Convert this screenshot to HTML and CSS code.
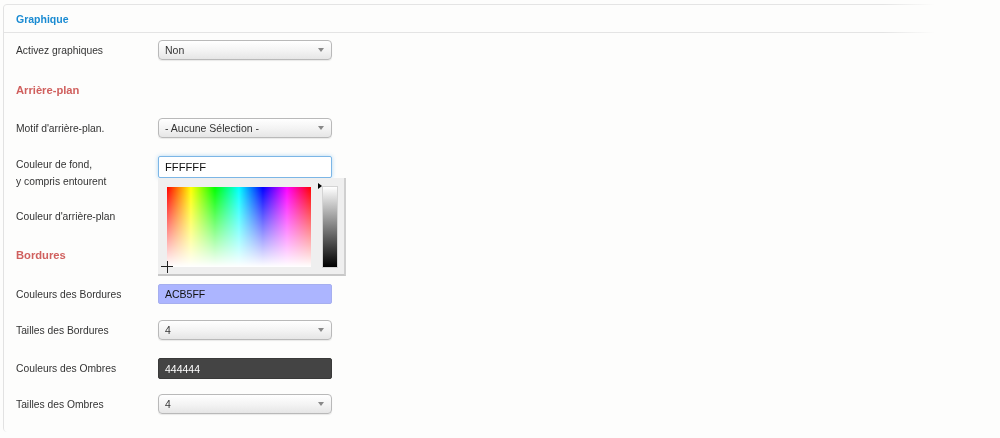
FILE: index.html
```html
<!DOCTYPE html>
<html lang="fr">
<head>
<meta charset="utf-8">
<title>Graphique</title>
<link rel="stylesheet" href="styles.css">
</head>
<body>
<div class="panel">
  <div class="panel-head">Graphique</div>
  <div class="panel-body">
    <div class="row r-activez">
      <label class="lbl">Activez graphiques</label>
      <div class="select"><span>Non</span><i class="caret"></i></div>
    </div>

    <h3 class="section">Arrière-plan</h3>

    <div class="row r-motif">
      <label class="lbl">Motif d'arrière-plan.</label>
      <div class="select"><span>- Aucune Sélection -</span><i class="caret"></i></div>
    </div>

    <div class="row r-fond">
      <label class="lbl two">Couleur de fond,<br>y compris entourent</label>
      <div class="ctrl-wrap">
        <div class="input focus">FFFFFF</div>
        <div class="picker">
          <div class="spectrum">
            <span class="cross-h"></span><span class="cross-v"></span>
          </div>
          <div class="lightness"></div>
          <span class="arrow"></span>
        </div>
      </div>
    </div>

    <div class="row r-arriere">
      <label class="lbl">Couleur d'arrière-plan</label>
      <div class="input">FFFFFF</div>
    </div>

    <h3 class="section s-bordures">Bordures</h3>

    <div class="row r-bcol">
      <label class="lbl">Couleurs des Bordures</label>
      <div class="input flat blue">ACB5FF</div>
    </div>

    <div class="row r-btaille">
      <label class="lbl">Tailles des Bordures</label>
      <div class="select"><span>4</span><i class="caret"></i></div>
    </div>

    <div class="row r-ocol">
      <label class="lbl">Couleurs des Ombres</label>
      <div class="input flat dark">444444</div>
    </div>

    <div class="row r-otaille">
      <label class="lbl">Tailles des Ombres</label>
      <div class="select"><span>4</span><i class="caret"></i></div>
    </div>
  </div>
</div>
</body>
</html>
```

FILE: styles.css
```css
* { box-sizing: border-box; }
html, body { margin: 0; padding: 0; }
body {
  background: #fdfdfc;
  font-family: "Liberation Sans", Arial, sans-serif;
  font-size: 10.3px;
  color: #333;
  width: 1000px;
  height: 438px;
  overflow: hidden;
}
.panel {
  margin: 4px 0 0 3px;
  width: 935px;
  height: 428px;
  border-left: 1px solid #e2e2e2;
  border-top: 1px solid #e4e4e4;
  border-radius: 4px 0 0 4px;
  -webkit-mask-image: linear-gradient(to right, #000 0, #000 880px, transparent 932px);
  mask-image: linear-gradient(to right, #000 0, #000 880px, transparent 932px);
}
.panel-head {
  height: 28px;
  padding: 8px 0 0 12px;
  font-weight: bold;
  font-size: 10.5px;
  color: #1a8bd2;
  border-bottom: 1px solid #e4e4e4;
}
.panel-body {
  padding: 7px 0 0 12px;
  position: relative;
}
.row {
  display: flex;
  align-items: center;
  min-height: 20px;
}
.lbl {
  width: 142px;
  flex: none;
  line-height: 14px;
  padding-top: 1px;
}
.lbl.two { line-height: 17px; align-self: flex-start; margin-top: -1px; }
.section {
  margin: 0;
  font-size: 11.2px;
  font-weight: bold;
  color: #d0605e;
  line-height: 16px;
  padding-top: 1px;
}
.r-activez { margin-bottom: 21px; }
.section { margin-bottom: 20px; }
.r-motif { margin-bottom: 18px; }
.r-fond { align-items: flex-start; min-height: 34px; margin-bottom: 16px; }
.r-arriere { margin-bottom: 20px; }
.s-bordures { margin-bottom: 21px; }
.r-bcol { margin-bottom: 16px; }
.r-btaille { margin-bottom: 18px; }
.r-ocol { margin-bottom: 15px; }

.select {
  width: 174px;
  height: 20px;
  border: 1px solid #b9b9b9;
  border-radius: 4px;
  background: linear-gradient(to bottom, #ffffff 0%, #f4f4f4 50%, #e6e6e6 100%);
  box-shadow: 0 1px 1px rgba(0,0,0,0.08);
  display: flex;
  align-items: center;
  padding: 0 6px;
  position: relative;
  color: #333;
  font-size: 10.5px;
}
.select span { flex: 1; line-height: 14px; }
.caret {
  width: 0; height: 0;
  border-left: 3.5px solid transparent;
  border-right: 3.5px solid transparent;
  border-top: 4px solid #888;
  margin-right: 1px;
}
.ctrl-wrap { position: relative; width: 174px; }
.input {
  width: 174px;
  height: 20px;
  border: 1px solid #ccc;
  border-radius: 2px;
  background: #fff;
  padding: 0 6px;
  display: flex;
  align-items: center;
  line-height: 14px;
  font-size: 10.5px;
}
.input.focus {
  height: 22px;
  border: 1px solid #7cb6e6;
  box-shadow: 0 0 4px rgba(82,168,236,0.45);
  font-size: 11.2px;
  color: #111;
  padding-left: 6px;
}
.input.flat { border: 1px solid transparent; }
.input.blue { background: #acb5ff; color: #111; border-color: #a6afef; }
.input.dark { background: #444444; color: #fff; height: 21px; border-color: #3a3a3a; }

.picker {
  position: absolute;
  left: 0;
  top: 22px;
  width: 188px;
  height: 98px;
  background: #efefef;
  border-right: 2px solid #d0d0d0;
  border-bottom: 2px solid #c8c8c8;
  z-index: 5;
}
.spectrum {
  position: absolute;
  left: 9px;
  top: 9px;
  width: 144px;
  height: 80px;
  background:
    linear-gradient(to bottom, rgba(255,255,255,0) 0%, rgba(255,255,255,1) 100%),
    linear-gradient(to right, #f00 0%, #ff0 16.6%, #0f0 33.3%, #0ff 50%, #00f 66.6%, #f0f 83.3%, #f00 100%);
}
.cross-h {
  position: absolute; left: -6px; bottom: 0; width: 12px; height: 1px; background: #222;
}
.cross-v {
  position: absolute; left: 0; bottom: -6px; width: 1px; height: 12px; background: #222;
}
.lightness {
  position: absolute;
  left: 164px;
  top: 8px;
  width: 16px;
  height: 82px;
  border: 1px solid #d4d4d4;
  background: linear-gradient(to bottom, #fff 0%, #000 100%);
}
.arrow {
  position: absolute;
  left: 160px;
  top: 5px;
  width: 0; height: 0;
  border-top: 3.5px solid transparent;
  border-bottom: 3.5px solid transparent;
  border-left: 4px solid #000;
}
```
